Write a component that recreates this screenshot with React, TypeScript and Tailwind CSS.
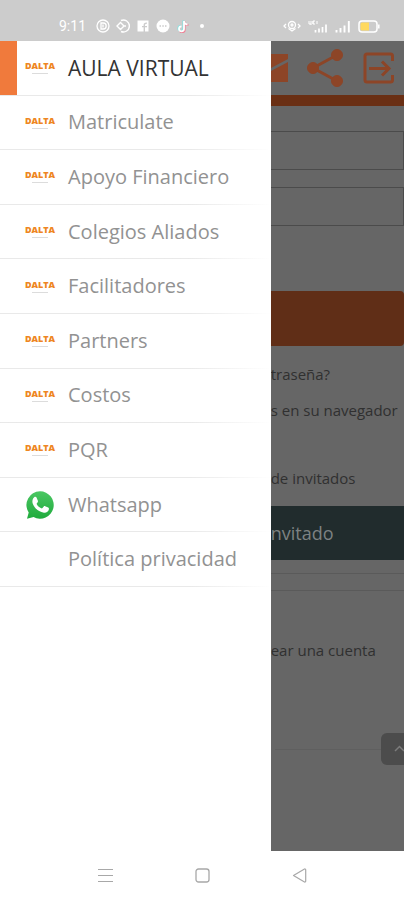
import { clsx } from 'clsx';

type MenuItem = { label: string; icon?: 'dalta' | 'whatsapp'; active?: boolean };

const menu: MenuItem[] = [
  { label: 'AULA VIRTUAL', icon: 'dalta', active: true },
  { label: 'Matriculate', icon: 'dalta' },
  { label: 'Apoyo Financiero', icon: 'dalta' },
  { label: 'Colegios Aliados', icon: 'dalta' },
  { label: 'Facilitadores', icon: 'dalta' },
  { label: 'Partners', icon: 'dalta' },
  { label: 'Costos', icon: 'dalta' },
  { label: 'PQR', icon: 'dalta' },
  { label: 'Whatsapp', icon: 'whatsapp' },
  { label: 'Política privacidad' },
];

function DaltaLogo() {
  return (
    <span className="flex flex-col items-center w-7 gap-[2px]">
      <span className="text-[9px] leading-[10px] font-extrabold text-[#ee8622]">DALTA</span>
      <span className="w-4 h-px bg-[#dcdcdc]" />
    </span>
  );
}

function WhatsappLogo() {
  return (
    <svg viewBox="0 0 28 28" className="size-7" aria-hidden="true">
      <defs>
        <linearGradient id="wa" x1="0" y1="0" x2="0" y2="1">
          <stop offset="0" stopColor="#4bc763" />
          <stop offset="1" stopColor="#20ab3d" />
        </linearGradient>
      </defs>
      <path d="M14 .3a13.700 13.700 0 1 1-6.400 25.800L1 27.700l1.700-6.300A13.700 13.700 0 0 1 14 .3Z" fill="url(#wa)" />
      <path
        d="M8.200 6.200c.7-.6 1.900-.6 2.300.3l1.400 3.300c.3.800-.1 1.400-1 2.500-.3.400-.3.700 0 1.200 1 1.700 2.500 3 4.400 3.800.5.200.8.200 1.200-.3l1.300-1.500c.4-.5.900-.5 1.400-.3l3 1.400c.7.300.8.800.7 1.600-.4 2.500-2.700 3.800-5 3.500-5.300-.8-9.800-4.900-11.200-9.300-.8-2.500.1-5 1.500-6.200Z"
        fill="#fff"
      />
    </svg>
  );
}

function StatusBar() {
  return (
    <header className="h-[41px] shrink-0 bg-[#cccccc] flex items-center justify-between pt-[11px] pl-[59px] pr-[24px] text-white">
      <div className="flex items-center gap-[6px]">
        <span className="text-sm leading-4 mr-1 font-['Roboto',sans-serif]">9:11</span>
        <svg viewBox="0 0 14 14" className="size-[14px]" fill="none" stroke="currentColor" strokeWidth="1.3">
          <circle cx="7" cy="7" r="6" />
          <path d="M5 4h2.200a3 3 0 0 1 0 6H5ZM7 5.500v3" />
        </svg>
        <svg viewBox="0 0 14 14" className="size-[14px]" fill="none" stroke="currentColor" strokeWidth="1.400">
          <path d="M5 1.500a6 6 0 1 1 0 11M4.500 3.500 8 7l-3.500 3.500L1 7ZM8 7h2" />
        </svg>
        <svg viewBox="0 0 14 14" className="size-[14px]">
          <path d="M1.500 1.500h11v11h-11Z" fill="currentColor" />
          <path d="M8.300 13V5.800q0-1.800 2.500-1.500M6 7.600h5" fill="none" stroke="#ccc" strokeWidth="1.400" />
        </svg>
        <svg viewBox="0 0 14 14" className="size-[14px]">
          <circle cx="7" cy="7" r="6.500" fill="currentColor" />
          <path d="M3.500 7h1.500M6.300 7h1.500M9 7h1.500" stroke="#ccc" strokeWidth="1.300" />
        </svg>
        <svg viewBox="0 0 14 14" className="size-[14px]" fill="none" strokeWidth="1.800">
          <path d="M7.300 1.500v7.800a2.500 2.500 0 1 1-2.500-2.500M7.300 1.800q.5 3 3.700 3.200" stroke="#7fe3e3" />
          <path d="M8.700 2.500v7.800a2.500 2.500 0 0 1-5 1M8.700 3q.5 3 3.700 3" stroke="#ee8195" />
          <path d="M8 2v7.800a2.500 2.500 0 1 1-2.500-2.500M8 2.300q.5 3 3.500 3.200" stroke="#fff" />
        </svg>
        <span className="size-1 rounded-full bg-white ml-1" />
      </div>
      <div className="flex items-center gap-[7px]">
        <svg viewBox="0 0 18 12" className="w-[18px] h-3" fill="none" stroke="currentColor" strokeWidth="1.300">
          <path d="M3 4 1 6l2 2M15 4l2 2-2 2M5.500 8.500 9 11l3.500-2.500" />
          <circle cx="9" cy="5" r="3.500" />
          <circle cx="9" cy="5" r="1" />
        </svg>
        <svg viewBox="0 0 20 13" className="w-5 h-[13px]" fill="none" stroke="currentColor" strokeWidth="1.300">
          <path d="M1 1v3h2M3 1v4M5 1v3M7 1H5v3h2M9 1v3" strokeWidth="1" />
          <path d="M7.500 10v2.500M11 8.500v4M14.500 7v5.500M18 4.500v8" strokeWidth="1.700" />
        </svg>
        <svg viewBox="0 0 16 13" className="w-4 h-[13px]" fill="none" stroke="currentColor" strokeWidth="1.900">
          <path d="M1.500 10v2.500M5.500 8v4.500M9.500 5.500v7M13.800 1v11.500" />
        </svg>
        <svg viewBox="0 0 22 13" className="w-[22px] h-[13px]">
          <rect x="1" y="1" width="18" height="11" rx="3" fill="none" stroke="#fff" strokeWidth="1.500" />
          <path d="M4 2.500h7v8H4q-1.500 0-1.500-1.500V4q0-1.500 1.500-1.500Z" fill="#ffd95e" />
          <path d="M20.800 4.500v4" stroke="#fff" strokeWidth="1.500" />
        </svg>
      </div>
    </header>
  );
}

function Drawer() {
  return (
    <nav className="w-[67%] shrink-0 bg-white font-['Open_Sans',sans-serif]">
      <ul className="grid grid-rows-10 h-[546px]">
        {menu.map((item) => (
          <li key={item.label} className="flex flex-col">
            <a href="#" className="flex flex-1 items-center">
              <span className={clsx('w-[17px] self-stretch shrink-0', item.active && 'bg-[#f07a3c]')} />
              <span className="w-[51px] shrink-0 pl-[9px]">
                {item.icon === 'dalta' && <DaltaLogo />}
                {item.icon === 'whatsapp' && <WhatsappLogo />}
              </span>
              <span
                className={clsx(
                  'leading-6 whitespace-nowrap',
                  item.active ? 'text-[21px] text-[#333333]' : 'text-xl text-[#929292]',
                )}
              >
                {item.label}
              </span>
            </a>
            <span className="h-px bg-linear-to-r from-[#e9e9e9] from-70% to-white" />
          </li>
        ))}
      </ul>
    </nav>
  );
}

function LoginPage() {
  return (
    <main className={page}>
      <div className="h-[54px] flex items-center justify-between pr-[9px]">
        <button aria-label="Correo">
          <svg viewBox="0 0 18 28" className="w-[18px] h-7">
            <path d="M0 0h17v5L0 14ZM0 17 17 8v20H0Z" fill="#8d4527" />
          </svg>
        </button>
        <button aria-label="Compartir">
          <svg viewBox="0 0 40 40" className="size-10" fill="#8d4527" stroke="#8d4527">
            <path d="M31 7 7 20l24 13" fill="none" strokeWidth="3" />
            <circle cx="31" cy="7" r="5.500" />
            <circle cx="7" cy="20" r="5.500" />
            <circle cx="31" cy="33" r="5.500" />
          </svg>
        </button>
        <button aria-label="Salir">
          <svg viewBox="0 0 32 32" className="size-8" fill="none" stroke="#8d4527" strokeWidth="3">
            <path d="M29.500 9V4q0-2-2-2H4Q2 2 2 4v24q0 2 2 2h23.500q2 0 2-2v-5M6 16.500h20M19 9.500l7 7-7 7" />
          </svg>
        </button>
      </div>
      <div className="h-[11px] bg-[#6a2f14]" />

      <form className="flex flex-col pt-[25px]">
        <input aria-label="Usuario" className={field} />
        <input aria-label="Contraseña" type="password" className={clsx(field, 'mt-[17px]')} />
        <button type="button" aria-label="Acceder" className="mt-[65px] h-[55px] bg-[#602e17] rounded-r" />
      </form>

      <a href="#" className="mt-4">traseña?</a>
      <p className="mt-3">s en su navegador</p>
      <p className="mt-11">de invitados</p>
      <button className="mt-4 h-[54px] bg-[#212c2d] text-[#7d8282] text-lg text-left">nvitado</button>
      <hr className="mt-[13px] border-[#5a5a5a]" />
      <hr className="mt-4 border-[#5a5a5a]" />
      <p className="mt-[47px]">ear una cuenta</p>

      <div className="mt-[71px] flex items-center">
        <hr className="flex-1 ml-1 border-[#5f5f5f]" />
        <button aria-label="Subir" className="w-[23px] h-8 rounded-l-md bg-[#4c4c4c] flex items-center justify-end">
          <svg viewBox="0 0 10 8" className="w-[10px] h-2" fill="none" stroke="#7c7c7c" strokeWidth="1.500">
            <path d="M1 6l4.500-4.500L10 6" />
          </svg>
        </button>
      </div>
    </main>
  );
}

function SystemNav() {
  return (
    <footer className="h-[49px] shrink-0 bg-white flex items-center justify-center gap-[82px] text-[#a8a8a8]">
      <button aria-label="Recientes">
        <svg viewBox="0 0 15 15" className="size-[15px]" fill="none" stroke="currentColor">
          <path d="M0 1.500h15M0 7.500h15M0 13.500h15" />
        </svg>
      </button>
      <button aria-label="Inicio">
        <svg viewBox="0 0 15 15" className="size-[15px]" fill="none" stroke="currentColor" strokeWidth="1.300">
          <rect x="1" y="1" width="13" height="13" rx="2.500" />
        </svg>
      </button>
      <button aria-label="Atrás">
        <svg viewBox="0 0 15 15" className="size-[15px]" fill="none" stroke="currentColor" strokeWidth="1.200" strokeLinejoin="round">
          <path d="M1.500 7.500 12.500 1q1.200-.2 1.200 1v11q0 1.200-1.200 1Z" />
        </svg>
      </button>
    </footer>
  );
}

export default function App() {
  return (
    <div className="min-h-screen flex flex-col bg-white">
      <StatusBar />
      <div className="flex flex-1">
        <Drawer />
        <LoginPage />
      </div>
      <SystemNav />
    </div>
  );
}

// --- Dimmed page behind the drawer ---
const page = `
  flex-1 min-w-0 overflow-hidden flex flex-col
  bg-[#666666] text-[#303030] text-[15px] leading-6 whitespace-nowrap
  font-['Open_Sans',sans-serif]`;
const field = `
  h-[39px] w-full px-2
  border border-l-0 border-[#4b4b4b] bg-transparent`;
